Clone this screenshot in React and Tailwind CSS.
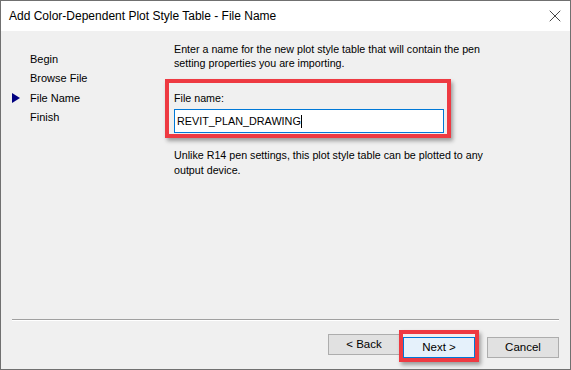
import { X } from 'lucide-react';

const steps = ['Begin', 'Browse File', 'File Name', 'Finish'];

const Button = ({ children, active }) => (
  <button
    className={`w-[72px] h-[21px] text-[11.5px] leading-none border ${
      active ? 'bg-[#e5f1fb] border-[#0078d7]' : 'bg-[#e1e1e1] border-[#adadad]'
    }`}
  >
    {children}
  </button>
);

const App = () => {
  return (
    <div
      className="w-[571px] h-[370px] flex flex-col border border-[#707070] bg-[#f0f0f0] text-black"
      style={{ fontFamily: '"Liberation Sans", Arial, sans-serif' }}
    >
      {/* title bar */}
      <div className="h-[30px] bg-white flex items-center justify-between pl-[8px] pr-[5px] shrink-0">
        <span className="text-[12px]">Add Color-Dependent Plot Style Table - File Name</span>
        <X size={20} strokeWidth={1} className="text-[#222]" />
      </div>

      <div className="flex-1 flex flex-col">
        <div className="flex">
          {/* steps */}
          <div className="w-[164px] pt-[18px] text-[11px]">
            {steps.map((s) => (
              <div key={s} className="h-[19.5px] flex items-center">
                <span className="w-[29px] flex justify-start pl-[11px]">
                  {s === 'File Name' && (
                    <svg width="8" height="10" viewBox="0 0 8 10">
                      <path d="M0 0 L8 5 L0 10 Z" fill="#000080" />
                    </svg>
                  )}
                </span>
                <span>{s}</span>
              </div>
            ))}
          </div>

          {/* main */}
          <div className="pt-[11px] text-[10.7px]">
            <p className="pl-[9px] leading-[14px] w-[340px]">
              Enter a name for the new plot style table that will contain the pen
              setting properties you are importing.
            </p>
            <div className="mt-[9px] w-[286px] border-4 border-[#ee3a42] shadow-[2px_3px_4px_rgba(0,0,0,0.35)] pl-[5px] pr-[3px] pt-[8px] pb-[1px]">
              <div className="leading-[14px]">File name:</div>
              <div className="mt-[4px] h-[24px] bg-white border border-[#0078d7] flex items-center pl-[2px] text-[10.8px]">
                <span>REVIT_PLAN_DRAWING</span>
                <span className="w-px h-[13px] bg-black" />
              </div>
            </div>
            <p className="mt-[10px] pl-[9px] leading-[15px] w-[340px]">
              Unlike R14 pen settings, this plot style table can be plotted to any
              output device.
            </p>
          </div>
        </div>

        {/* footer */}
        <div className="mt-auto">
          <div className="mx-[11px] border-t border-[#a0a0a0] border-b border-b-white" />
          <div className="flex justify-end pt-[13px] pb-[11px] pr-[11px]">
            <Button>&lt; Back</Button>
            <div className="relative ml-[3px]">
              <Button active>Next &gt;</Button>
              <div className="absolute -inset-[4px] border-4 border-[#ee3a42] shadow-[2px_3px_4px_rgba(0,0,0,0.35)] pointer-events-none" />
            </div>
            <div className="ml-[12px]">
              <Button>Cancel</Button>
            </div>
          </div>
        </div>
      </div>
    </div>
  );
};

export default App;
